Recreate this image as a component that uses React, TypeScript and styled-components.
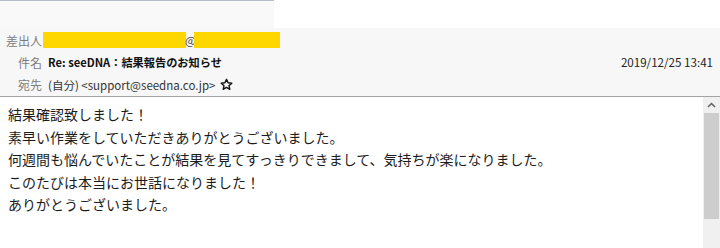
import React from "react";
import styled, { createGlobalStyle } from "styled-components";

const GlobalStyle = createGlobalStyle`
  html, body { margin: 0; padding: 0; background: #ffffff; }
  body { width: 720px; height: 248px; overflow: hidden; font-family: "Noto Sans CJK JP", "Noto Sans", sans-serif; }
`;

const Window = styled.div`
  width: 720px;
  height: 248px;
  display: flex;
  flex-direction: column;
  overflow: hidden;
`;

const TopStrip = styled.div`
  height: 28px;
  display: flex;
  flex-shrink: 0;
`;

const TabArea = styled.div`
  width: 274px;
  background: #f9f9fa;
  border-top: 1px solid #b9bccb;
  box-sizing: border-box;
`;

const BlankArea = styled.div`
  flex: 1;
  background: #ffffff;
`;

const Header = styled.div`
  background: #f7f7f7;
  border-bottom: 1px solid #a3a3a3;
  padding-top: 1px;
  display: grid;
  grid-template-rows: 22px 22px 23px;
  flex-shrink: 0;
`;

const Row = styled.div`
  display: flex;
  align-items: center;
  font-size: 12px;
  color: #333;
  padding-right: 7px;
`;

const Label = styled.span<{ $gap?: number }>`
  width: 42px;
  padding-left: 6px;
  box-sizing: border-box;
  text-align: right;
  color: #7d7d7d;
  font-size: 12px;
  flex-shrink: 0;
  margin-right: ${(p) => (p.$gap ?? 6)}px;
  white-space: nowrap;
`;

const Redact = styled.span<{ $w: number }>`
  display: inline-block;
  width: ${(p) => p.$w}px;
  height: 16px;
  background: #ffd700;
`;

const At = styled.span`
  color: #444;
  font-size: 11.5px;
  width: 8px;
  display: inline-flex;
  justify-content: center;
  letter-spacing: -1px;
`;

const Subject = styled.span`
  font-weight: 700;
  font-size: 11.2px;
  color: #111;
  flex: 1;
`;

const DateText = styled.span`
  color: #222;
  font-size: 11.6px;
`;

const Recipient = styled.span`
  color: #333;
  font-size: 11.5px;
  display: flex;
  align-items: center;
  gap: 5px;
`;

const Body = styled.div`
  flex: 1;
  display: flex;
  min-height: 0;
`;

const Content = styled.div`
  flex: 1;
  padding: 6px 8px 0 8px;
  font-size: 14px;
  line-height: 22.5px;
  color: #1c1c1c;
`;

const Line = styled.div`
  white-space: nowrap;
`;

const Scrollbar = styled.div`
  width: 17px;
  background: #f0f0f0;
  display: flex;
  flex-direction: column;
  align-items: center;
  flex-shrink: 0;
`;

const ArrowBox = styled.div`
  height: 16px;
  width: 17px;
  display: flex;
  align-items: center;
  justify-content: center;
`;

const Thumb = styled.div`
  width: 15px;
  height: 106px;
  background: #cdcdcd;
`;

const Star = () => (
  <svg width="13" height="13" viewBox="0 0 24 24" fill="none" stroke="#111" strokeWidth="2.6" strokeLinejoin="round">
    <polygon points="12,2.5 14.9,8.9 21.8,9.6 16.6,14.2 18.1,21 12,17.5 5.9,21 7.4,14.2 2.2,9.6 9.1,8.9" />
  </svg>
);

const UpArrow = () => (
  <svg width="9" height="6" viewBox="0 0 9 6" fill="none" stroke="#606060" strokeWidth="1.5">
    <polyline points="1,5 4.5,1.5 8,5" />
  </svg>
);

const lines = [
  "結果確認致しました！",
  "素早い作業をしていただきありがとうございました。",
  "何週間も悩んでいたことが結果を見てすっきりできまして、気持ちが楽になりました。",
  "このたびは本当にお世話になりました！",
  "ありがとうございました。",
];

export default function App() {
  return (
    <>
      <GlobalStyle />
      <Window>
        <TopStrip>
          <TabArea />
          <BlankArea />
        </TopStrip>
        <Header>
          <Row>
            <Label $gap={1}>差出人</Label>
            <Redact $w={143} />
            <At>@</At>
            <Redact $w={86} />
          </Row>
          <Row>
            <Label>件名</Label>
            <Subject>Re: seeDNA：結果報告のお知らせ</Subject>
            <DateText>2019/12/25 13:41</DateText>
          </Row>
          <Row>
            <Label>宛先</Label>
            <Recipient>
              (自分) &lt;support@seedna.co.jp&gt;
              <Star />
            </Recipient>
          </Row>
        </Header>
        <Body>
          <Content>
            {lines.map((l) => (
              <Line key={l}>{l}</Line>
            ))}
          </Content>
          <Scrollbar>
            <ArrowBox>
              <UpArrow />
            </ArrowBox>
            <Thumb />
          </Scrollbar>
        </Body>
      </Window>
    </>
  );
}
